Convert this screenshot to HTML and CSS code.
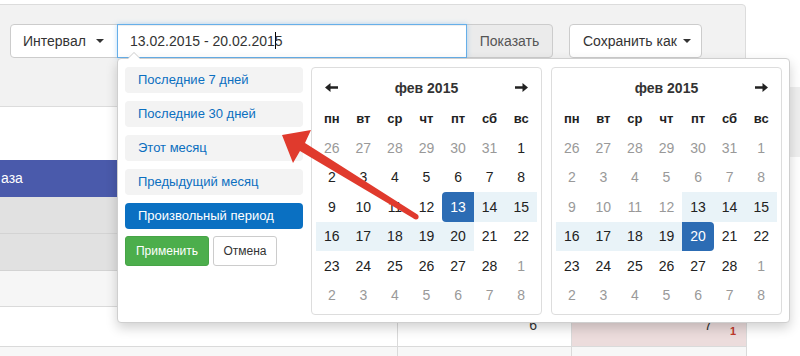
FILE: index.html
```html
<!DOCTYPE html>
<html lang="ru">
<head>
<meta charset="utf-8">
<title>Отчёт</title>
<link rel="stylesheet" href="styles.css">
</head>
<body>
<div class="page">
  <div class="main">
    <div class="panel">
      <div class="toolbar">
        <div class="group">
          <button class="btn btn-interval">Интервал <span class="caret"></span></button>
          <div class="field">13.02.2015 - 20.02.201<span class="cursor"></span>5</div>
          <button class="btn btn-show">Показать</button>
        </div>
        <button class="btn btn-save">Сохранить как<span class="caret caret-gap"></span></button>
      </div>
    </div>

    <div class="report">
      <div class="r-head">аза</div>
      <div class="r-gray"></div>
      <div class="r-gray"></div>
      <div class="r-light"></div>
      <div class="r-row">
        <div class="cell"></div>
        <div class="cell num">6<span class="delta"></span></div>
        <div class="cell num warn">7<span class="delta">1</span></div>
      </div>
      <div class="r-row r-alt">
        <div class="cell"></div>
        <div class="cell"></div>
        <div class="cell"></div>
      </div>
    </div>
  </div>
  <div class="side"><div class="side-block"></div></div>

  <div class="picker">
    <div class="ranges">
      <ul class="range-list">
        <li class="range">Последние 7 дней</li>
        <li class="range">Последние 30 дней</li>
        <li class="range">Этот месяц</li>
        <li class="range">Предыдущий месяц</li>
        <li class="range active">Произвольный период</li>
      </ul>
      <div class="range-btns">
        <button class="apply">Применить</button>
        <button class="cancel">Отмена</button>
      </div>
    </div>

    <div class="cal cal-left">
      <table class="month">
        <thead>
          <tr class="nav">
            <th><svg class="nav-arrow" width="13" height="9" viewBox="0 0 13 9"><path d="M13 3.3H5.5V0L0 4.5 5.5 9V5.7H13z" fill="#222"/></svg></th>
            <th colspan="5">фев 2015</th>
            <th><svg class="nav-arrow" width="13" height="9" viewBox="0 0 13 9"><path d="M0 3.3h7.5V0L13 4.5 7.5 9V5.7H0z" fill="#222"/></svg></th>
          </tr>
          <tr class="dow"><th>пн</th><th>вт</th><th>ср</th><th>чт</th><th>пт</th><th>сб</th><th>вс</th></tr>
        </thead>
        <tbody>
          <tr><td class="off">26</td><td class="off">27</td><td class="off">28</td><td class="off">29</td><td class="off">30</td><td class="off">31</td><td>1</td></tr>
          <tr><td>2</td><td>3</td><td>4</td><td>5</td><td>6</td><td>7</td><td>8</td></tr>
          <tr><td>9</td><td>10</td><td>11</td><td>12</td><td class="start">13</td><td class="in">14</td><td class="in">15</td></tr>
          <tr><td class="in">16</td><td class="in">17</td><td class="in">18</td><td class="in">19</td><td class="in">20</td><td>21</td><td>22</td></tr>
          <tr><td>23</td><td>24</td><td>25</td><td>26</td><td>27</td><td>28</td><td class="off">1</td></tr>
          <tr><td class="off">2</td><td class="off">3</td><td class="off">4</td><td class="off">5</td><td class="off">6</td><td class="off">7</td><td class="off">8</td></tr>
        </tbody>
      </table>
    </div>

    <div class="cal cal-right">
      <table class="month">
        <thead>
          <tr class="nav">
            <th></th>
            <th colspan="5">фев 2015</th>
            <th><svg class="nav-arrow" width="13" height="9" viewBox="0 0 13 9"><path d="M0 3.3h7.5V0L13 4.5 7.5 9V5.7H0z" fill="#222"/></svg></th>
          </tr>
          <tr class="dow"><th>пн</th><th>вт</th><th>ср</th><th>чт</th><th>пт</th><th>сб</th><th>вс</th></tr>
        </thead>
        <tbody>
          <tr><td class="off">26</td><td class="off">27</td><td class="off">28</td><td class="off">29</td><td class="off">30</td><td class="off">31</td><td class="off">1</td></tr>
          <tr><td class="off">2</td><td class="off">3</td><td class="off">4</td><td class="off">5</td><td class="off">6</td><td class="off">7</td><td class="off">8</td></tr>
          <tr><td class="off">9</td><td class="off">10</td><td class="off">11</td><td class="off">12</td><td class="in">13</td><td class="in">14</td><td class="in">15</td></tr>
          <tr><td class="in">16</td><td class="in">17</td><td class="in">18</td><td class="in">19</td><td class="end">20</td><td>21</td><td>22</td></tr>
          <tr><td>23</td><td>24</td><td>25</td><td>26</td><td>27</td><td>28</td><td class="off">1</td></tr>
          <tr><td class="off">2</td><td class="off">3</td><td class="off">4</td><td class="off">5</td><td class="off">6</td><td class="off">7</td><td class="off">8</td></tr>
        </tbody>
      </table>
    </div>
  </div>

  <svg class="pointer" width="800" height="356" viewBox="0 0 800 356">
    <polygon points="282,135 311,130 305,143 417.5,214.5 414.5,219 300,151 293,163" fill="#e03a2d"/>
    <circle cx="416" cy="216.8" r="2.6" fill="#e03a2d"/>
  </svg>
</div>
</body>
</html>
```

FILE: styles.css
```css
* { box-sizing: border-box; }

body {
  margin: 0;
  font-family: "Liberation Sans", Arial, sans-serif;
  color: #333;
  background: #fff;
}

.page {
  position: relative;
  width: 800px;
  height: 356px;
  overflow: hidden;
  display: flex;
  align-items: flex-start;
}

.main {
  width: 747px;
  flex: none;
}

/* ---------- toolbar panel ---------- */
.panel {
  margin: 4px 0 0 -5px;
  width: 751px;
  height: 103px;
  border: 1px solid #dcdcdc;
  border-radius: 4px;
  background: #f2f2f2;
  padding: 19px 0 0 14px;
}

.toolbar {
  display: flex;
  align-items: flex-start;
  gap: 16px;
}

.group { display: flex; }

.btn {
  font-family: "Liberation Sans", Arial, sans-serif;
  font-size: 14px;
  line-height: 20px;
  height: 34px;
  padding: 6px 12px;
  border: 1px solid #ccc;
  background: #fff;
  color: #333;
  border-radius: 4px;
  display: flex;
  align-items: center;
  white-space: nowrap;
}

.btn-interval {
  width: 108px;
  padding: 6px 13px 6px 12px;
  border-radius: 4px 0 0 4px;
  justify-content: space-between;
}

.field {
  position: relative;
  z-index: 1;
  width: 350px;
  height: 34px;
  margin-left: -1px;
  padding: 6px 12px;
  border: 1px solid #66afe9;
  background: #fff;
  box-shadow: inset 0 1px 1px rgba(0,0,0,.075), 0 0 5px rgba(102,175,233,.45);
  font-size: 14px;
  line-height: 20px;
  color: #333;
  white-space: nowrap;
}

.cursor {
  display: inline-block;
  width: 1px;
  height: 17px;
  margin-right: -1px;
  background: #000;
  vertical-align: -3px;
}

.btn-show {
  width: 87px;
  margin-left: -1px;
  border-radius: 0 4px 4px 0;
  background: #ebebeb;
  color: #555;
  justify-content: center;
}

.btn-save {
  width: 133px;
  padding: 6px 10px 6px 13px;
}

.caret {
  display: inline-block;
  flex: none;
  width: 0;
  height: 0;
  border-top: 4px solid #333;
  border-left: 4px solid transparent;
  border-right: 4px solid transparent;
}

.caret-gap { margin-left: 6px; }

/* ---------- background report ---------- */
.report { margin-top: 53px; }

.r-head {
  height: 37px;
  background: #4a5aab;
  color: #fff;
  font-size: 14px;
  line-height: 37px;
  padding-left: 1px;
}

.r-gray {
  height: 37px;
  background: #e1e1e1;
  border-bottom: 1px solid #d3d3d3;
}

.r-light {
  height: 36px;
  background: #f6f6f6;
  border-bottom: 1px solid #dadada;
}

.r-row {
  display: grid;
  grid-template-columns: 397px 174px 176px;
  height: 40px;
  border-bottom: 1px solid #dadada;
}

.r-alt {
  height: 20px;
  background: #f7f7f7;
  border-bottom: 0;
}

.cell + .cell { border-left: 1px solid #dadada; }
.cell:last-child { border-right: 1px solid #dadada; }

.num {
  text-align: right;
  padding: 8px 10px 0 0;
  font-size: 14px;
  line-height: 20px;
  color: #333;
}

.warn { background: #ecdcdc; }

.delta {
  display: inline-block;
  width: 24px;
  text-align: right;
  font-size: 11px;
  font-weight: bold;
  color: #c0392b;
  vertical-align: -5px;
}

.side { margin-left: 43px; }

.side-block {
  margin-top: 87px;
  width: 20px;
  height: 70px;
  background: #efefef;
}

/* ---------- date range picker ---------- */
.picker {
  position: absolute;
  left: 117px;
  top: 58px;
  z-index: 2;
  width: 673px;
  height: 265px;
  display: flex;
  padding: 8px 7px 7px 7px;
  border: 1px solid #cfcfcf;
  border-radius: 4px;
  background: #fff;
  box-shadow: 0 5px 12px rgba(0,0,0,.18);
}

.picker::before {
  content: "";
  position: absolute;
  top: -7px;
  left: 9px;
  border-left: 7px solid transparent;
  border-right: 7px solid transparent;
  border-bottom: 7px solid #ccc;
}

.picker::after {
  content: "";
  position: absolute;
  top: -6px;
  left: 10px;
  border-left: 6px solid transparent;
  border-right: 6px solid transparent;
  border-bottom: 6px solid #fff;
}

.ranges {
  width: 178px;
  flex: none;
}

.range-list {
  list-style: none;
  margin: 0;
  padding: 0;
}

.range {
  height: 26px;
  margin-bottom: 8px;
  padding-left: 13px;
  border-radius: 4px;
  background: #f3f3f3;
  color: #0b6fc0;
  font-size: 13px;
  line-height: 26px;
}

.range.active {
  background: #0a70c2;
  color: #fff;
}

.range-btns {
  display: flex;
  gap: 4px;
  margin-top: -1px;
}

.apply, .cancel {
  height: 30px;
  border-radius: 3px;
  font-family: "Liberation Sans", Arial, sans-serif;
  font-size: 12px;
  padding: 0;
}

.apply {
  width: 84px;
  background: #4cae4c;
  border: 1px solid #47a447;
  color: #fff;
}

.cancel {
  width: 64px;
  background: #fff;
  border: 1px solid #ccc;
  color: #333;
}

.cal {
  width: 231px;
  height: 248px;
  flex: none;
  padding: 4px;
  border: 1px solid #ddd;
  border-radius: 4px;
}

.cal-left { margin-left: 8px; }
.cal-right { margin-left: 9px; }

.month {
  width: 221px;
  border-collapse: separate;
  border-spacing: 0;
  table-layout: fixed;
}

.month th,
.month td {
  padding: 0;
  text-align: center;
  font-size: 14px;
}

.month .nav th {
  height: 31px;
  font-weight: bold;
  color: #333;
}

.nav-arrow { display: block; margin: 0 auto; }

.month .dow th {
  height: 30px;
  font-size: 13px;
  font-weight: bold;
  color: #222;
}

.month td {
  height: 29.5px;
  color: #222;
}

.month td.off { color: #999; }
.month td.in { background: #e9f3f8; }

.month td.start,
.month td.end {
  background: #2c6cb4;
  color: #fff;
}

.month td.start { border-radius: 4px 0 0 4px; }
.month td.end { border-radius: 0 4px 4px 0; }

/* ---------- annotation arrow ---------- */
.pointer {
  position: absolute;
  left: 0;
  top: 0;
  z-index: 3;
  pointer-events: none;
}
```
